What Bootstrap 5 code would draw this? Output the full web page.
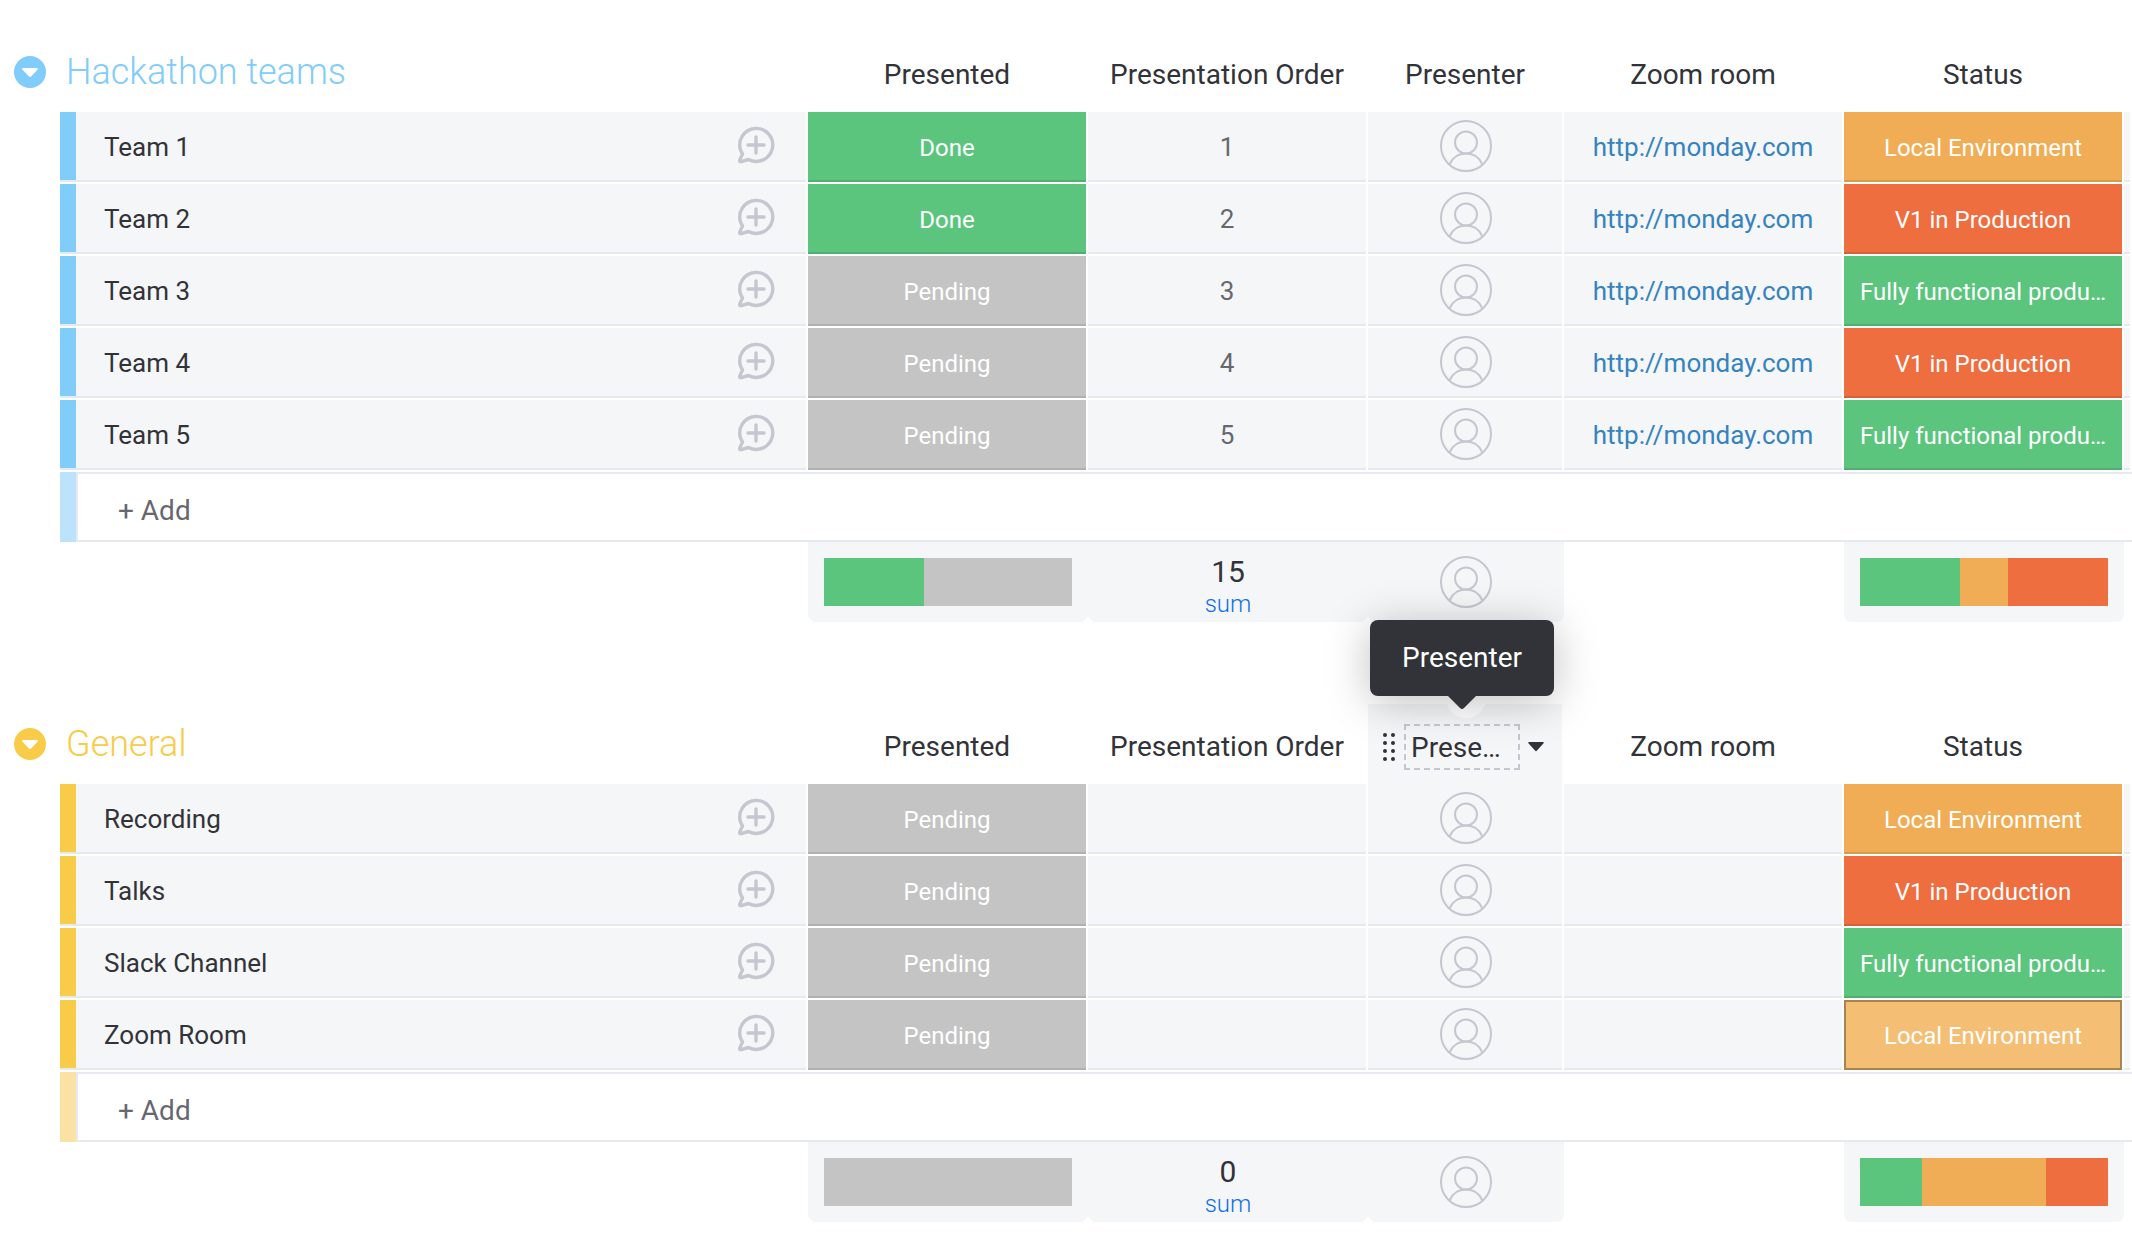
<!DOCTYPE html>
<html lang="en">
<head>
<meta charset="utf-8">
<meta name="viewport" content="width=device-width, initial-scale=1">
<title>Hackathon board</title>
<link href="https://cdn.jsdelivr.net/npm/bootstrap@5.3.0/dist/css/bootstrap.min.css" rel="stylesheet">
<style>
  :root { --cell: #f5f6f8; --line: #e6e9ef; --ink: #323338; --icon: #c5c7d0; --muted: #67686f;
          --done: #5bc57e; --idle: #c4c4c4; --local: #f0ad55; --prod: #ee6e3f; }
  body { font-family: Roboto, "Liberation Sans", sans-serif; color: var(--ink); font-size: 26px; line-height: 32px; overflow-x: hidden; }
  .group-blue { --group: #80ccfb; --group-soft: #bde3fc; }
  .group-yellow { --group: #f8cb48; --group-soft: #fae2a4; }

  .boards { display: grid; row-gap: 82px; }
  .board { table-layout: fixed; border-collapse: separate; border-spacing: 0; }
  .board th, .board td { padding: 0; font-weight: 400; }
  .c-gutter { width: 60px; } .c-bar { width: 16px; } .c-wide { width: 280px; } .c-person { width: 196px; } .c-tail { width: 8px; }

  /* header */
  .board thead th { height: 80px; font-size: 28px; text-align: center; border-right: 2px solid transparent; padding-top: 6px; background-clip: padding-box; }
  .board thead th.group-head { padding: 0 0 0 14px; text-align: left; }
  .group-title { font-size: 36px; font-weight: 300; line-height: 40px; color: var(--group); }
  .icon-btn { border: 0; padding: 0; background: none; display: block; color: inherit; }
  .icon-btn svg, .person { display: block; }
  .toggle { color: var(--group); }

  /* item rows */
  .items td { height: 72px; background: var(--cell); background-clip: padding-box; border-right: 2px solid #fff; border-bottom: 2px solid #fff; box-shadow: inset 0 -2px var(--line); text-align: center; }
  .items td.gutter { background: none; box-shadow: none; }
  .items td.bar { background-color: var(--group); border-right: 0; }
  .items td.item { padding: 0 30px 2px 28px; text-align: left; }
  .item span { padding-top: 2px; }
  .items td.order { color: var(--muted); }
  .items a { color: #3583bf; text-decoration: none; }
  .items td.person-cell { padding: 0 0 2px 2px; }
  .items td.state { color: #fff; font-size: 24px; box-shadow: inset 0 -2px rgba(0,0,0,.1); white-space: nowrap; padding-top: 2px; }
  .s-done { --bg: var(--done); } .s-idle { --bg: var(--idle); } .s-local { --bg: var(--local); } .s-prod { --bg: var(--prod); }
  .items td.state { background-color: var(--bg); }
  .items td.state.picked { background-color: #f4be74; box-shadow: inset 0 0 0 2px #a98350; }
  .bubble { color: var(--icon); }
  .person { color: var(--icon); margin: 0 auto; }

  /* new item row */
  .adder td { height: 70px; }
  .adder .bar { background: var(--group-soft); }
  .adder .add-cell { border: 2px solid var(--line); border-right: 0; }
  .add-input { border: 0; outline: 0; width: 100%; height: 66px; padding: 6px 0 0 40px; font-size: 28px; color: var(--ink); background: none; }
  .add-input::placeholder { color: var(--muted); opacity: 1; }

  /* summary row */
  .totals td { height: 80px; vertical-align: top; text-align: center; }
  .totals td.sum-cell { background: var(--cell); border-radius: 0 0 8px 8px; }
  .totals td.sum-bar { padding: 16px; }
  .totals td.sum-num { padding-top: 14px; }
  .totals td.sum-person { padding-top: 14px; }
  .stack { height: 48px; display: flex; }
  .stack span { background: var(--bg); }
  .total { font-size: 30px; }
  .unit { font-size: 24px; font-weight: 300; color: #0f6fe8; }

  /* hovered column header with its tooltip */
  .board thead th.hovered { background-color: var(--cell); padding-right: 4px; }
  .name-box { border: 2px dashed #c5c7d0; width: 116px; height: 46px; padding: 6px 0 0 5px; text-align: left; line-height: 32px; }
  .knob { position: absolute; z-index: 1; left: 78px; top: -26px; width: 40px; height: 40px; border-radius: 50%; background: #fff; border: 0; padding: 0; }
  .tip { position: absolute; z-index: 2; left: 2px; bottom: 88px; width: 184px; height: 76px; border-radius: 8px; background: var(--ink); color: #fff; line-height: 76px; box-shadow: 0 6px 44px rgba(0,0,0,.25); }
  .tip svg { position: absolute; left: 77px; top: 75px; }
</style>
</head>
<body class="bg-white">

<svg width="0" height="0" class="position-absolute" aria-hidden="true">
  <symbol id="i-toggle" viewBox="0 0 32 32">
    <circle cx="16" cy="16" r="16" fill="currentColor"/>
    <path d="M9 12h14a1 1 0 0 1 .7 1.600l-6.700 6.800a1.400 1.400 0 0 1-2 0l-6.700-6.800A1 1 0 0 1 9 12z" fill="#fff"/>
  </symbol>
  <symbol id="i-bubble" viewBox="0 0 40 40">
    <path d="M4.700 24.500A16.500 16.500 0 1 1 12.500 33.500L5.200 35.700a1.200 1.200 0 0 1-1.500-1.600L6.500 28z" fill="none" stroke="currentColor" stroke-width="3.400" stroke-linejoin="round"/>
    <path d="M20 11v16M12 19h16" stroke="currentColor" stroke-width="3.400" stroke-linecap="round"/>
  </symbol>
  <symbol id="i-person" viewBox="0 0 52 52">
    <g fill="none" stroke="currentColor" stroke-width="2">
      <circle cx="26" cy="26" r="25"/>
      <circle cx="26" cy="22.500" r="11"/>
      <path d="M9.500 44.500C12.500 37.500 18.500 33.500 26 33.500s13.500 4 16.500 11"/>
    </g>
  </symbol>
</svg>

<main class="pt-4">
<div class="boards pt-2">

<table class="board w-100 group-blue">
  <colgroup><col class="c-gutter"><col class="c-bar"><col><col class="c-wide"><col class="c-wide"><col class="c-person"><col class="c-wide"><col class="c-wide"><col class="c-tail"></colgroup>
  <thead>
    <tr>
      <th class="group-head" colspan="3"><div class="d-flex align-items-center"><button class="icon-btn toggle me-3" type="button" aria-label="Collapse group"><svg width="32" height="32"><use href="#i-toggle"/></svg></button><span class="group-title ps-1">Hackathon teams</span></div></th>
      <th>Presented</th><th>Presentation Order</th><th>Presenter</th><th>Zoom room</th><th>Status</th><th></th>
    </tr>
  </thead>
  <tbody class="items">
    <tr>
      <td class="gutter"></td><td class="bar"></td>
      <td class="item"><div class="d-flex justify-content-between align-items-center"><span>Team 1</span><button class="icon-btn bubble" type="button" aria-label="Start conversation"><svg width="40" height="40"><use href="#i-bubble"/></svg></button></div></td>
      <td class="state s-done">Done</td><td class="order">1</td>
      <td class="person-cell"><svg class="person" width="52" height="52"><use href="#i-person"/></svg></td>
      <td class="link"><a href="http://monday.com">http://monday.com</a></td>
      <td class="state s-local">Local Environment</td><td></td>
    </tr>
    <tr>
      <td class="gutter"></td><td class="bar"></td>
      <td class="item"><div class="d-flex justify-content-between align-items-center"><span>Team 2</span><button class="icon-btn bubble" type="button" aria-label="Start conversation"><svg width="40" height="40"><use href="#i-bubble"/></svg></button></div></td>
      <td class="state s-done">Done</td><td class="order">2</td>
      <td class="person-cell"><svg class="person" width="52" height="52"><use href="#i-person"/></svg></td>
      <td class="link"><a href="http://monday.com">http://monday.com</a></td>
      <td class="state s-prod">V1 in Production</td><td></td>
    </tr>
    <tr>
      <td class="gutter"></td><td class="bar"></td>
      <td class="item"><div class="d-flex justify-content-between align-items-center"><span>Team 3</span><button class="icon-btn bubble" type="button" aria-label="Start conversation"><svg width="40" height="40"><use href="#i-bubble"/></svg></button></div></td>
      <td class="state s-idle">Pending</td><td class="order">3</td>
      <td class="person-cell"><svg class="person" width="52" height="52"><use href="#i-person"/></svg></td>
      <td class="link"><a href="http://monday.com">http://monday.com</a></td>
      <td class="state s-done">Fully functional produ…</td><td></td>
    </tr>
    <tr>
      <td class="gutter"></td><td class="bar"></td>
      <td class="item"><div class="d-flex justify-content-between align-items-center"><span>Team 4</span><button class="icon-btn bubble" type="button" aria-label="Start conversation"><svg width="40" height="40"><use href="#i-bubble"/></svg></button></div></td>
      <td class="state s-idle">Pending</td><td class="order">4</td>
      <td class="person-cell"><svg class="person" width="52" height="52"><use href="#i-person"/></svg></td>
      <td class="link"><a href="http://monday.com">http://monday.com</a></td>
      <td class="state s-prod">V1 in Production</td><td></td>
    </tr>
    <tr>
      <td class="gutter"></td><td class="bar"></td>
      <td class="item"><div class="d-flex justify-content-between align-items-center"><span>Team 5</span><button class="icon-btn bubble" type="button" aria-label="Start conversation"><svg width="40" height="40"><use href="#i-bubble"/></svg></button></div></td>
      <td class="state s-idle">Pending</td><td class="order">5</td>
      <td class="person-cell"><svg class="person" width="52" height="52"><use href="#i-person"/></svg></td>
      <td class="link"><a href="http://monday.com">http://monday.com</a></td>
      <td class="state s-done">Fully functional produ…</td><td></td>
    </tr>
  </tbody>
  <tfoot>
    <tr class="adder"><td></td><td class="bar"></td><td class="add-cell" colspan="7"><input class="add-input d-block" type="text" placeholder="+ Add" aria-label="Add item to Hackathon teams"></td></tr>
    <tr class="totals">
      <td colspan="3"></td>
      <td class="sum-cell sum-bar"><div class="stack"><span class="s-done" style="width:40.300%"></span><span class="s-idle" style="width:59.700%"></span></div></td>
      <td class="sum-cell sum-num"><div class="total">15</div><div class="unit">sum</div></td>
      <td class="sum-cell sum-person"><svg class="person" width="52" height="52"><use href="#i-person"/></svg></td>
      <td></td>
      <td class="sum-cell sum-bar"><div class="stack"><span class="s-done" style="width:40.300%"></span><span class="s-local" style="width:19.400%"></span><span class="s-prod" style="width:40.300%"></span></div></td>
      <td></td>
    </tr>
  </tfoot>
</table>

<table class="board w-100 group-yellow">
  <colgroup><col class="c-gutter"><col class="c-bar"><col><col class="c-wide"><col class="c-wide"><col class="c-person"><col class="c-wide"><col class="c-wide"><col class="c-tail"></colgroup>
  <thead>
    <tr>
      <th class="group-head" colspan="3"><div class="d-flex align-items-center"><button class="icon-btn toggle me-3" type="button" aria-label="Collapse group"><svg width="32" height="32"><use href="#i-toggle"/></svg></button><span class="group-title ps-1">General</span></div></th>
      <th>Presented</th><th>Presentation Order</th>
      <th class="hovered position-relative">
        <button class="knob" type="button" aria-label="Collapse column"></button>
        <div class="tip" role="tooltip">Presenter<svg width="30" height="15" viewBox="0 0 30 15"><path d="M0 0h30L17 13a3 3 0 0 1-4 0z" fill="#323338"/></svg></div>
        <div class="d-flex align-items-center justify-content-center gap-2">
          <svg width="14" height="30" viewBox="0 0 14 30" fill="#323338"><circle cx="3" cy="3" r="2"/><circle cx="11" cy="3" r="2"/><circle cx="3" cy="11" r="2"/><circle cx="11" cy="11" r="2"/><circle cx="3" cy="19" r="2"/><circle cx="11" cy="19" r="2"/><circle cx="3" cy="27" r="2"/><circle cx="11" cy="27" r="2"/></svg>
          <div class="name-box">Prese…</div>
          <button class="icon-btn" type="button" aria-label="Column menu"><svg width="16" height="10" viewBox="0 0 16 10"><path d="M1 0h14a.8.8 0 0 1 .6 1.300L9 8.600a1.300 1.300 0 0 1-2 0L.4 1.300A.8.8 0 0 1 1 0z" fill="#323338"/></svg></button>
        </div>
      </th>
      <th>Zoom room</th><th>Status</th><th></th>
    </tr>
  </thead>
  <tbody class="items">
    <tr>
      <td class="gutter"></td><td class="bar"></td>
      <td class="item"><div class="d-flex justify-content-between align-items-center"><span>Recording</span><button class="icon-btn bubble" type="button" aria-label="Start conversation"><svg width="40" height="40"><use href="#i-bubble"/></svg></button></div></td>
      <td class="state s-idle">Pending</td><td></td>
      <td class="person-cell"><svg class="person" width="52" height="52"><use href="#i-person"/></svg></td>
      <td></td>
      <td class="state s-local">Local Environment</td><td></td>
    </tr>
    <tr>
      <td class="gutter"></td><td class="bar"></td>
      <td class="item"><div class="d-flex justify-content-between align-items-center"><span>Talks</span><button class="icon-btn bubble" type="button" aria-label="Start conversation"><svg width="40" height="40"><use href="#i-bubble"/></svg></button></div></td>
      <td class="state s-idle">Pending</td><td></td>
      <td class="person-cell"><svg class="person" width="52" height="52"><use href="#i-person"/></svg></td>
      <td></td>
      <td class="state s-prod">V1 in Production</td><td></td>
    </tr>
    <tr>
      <td class="gutter"></td><td class="bar"></td>
      <td class="item"><div class="d-flex justify-content-between align-items-center"><span>Slack Channel</span><button class="icon-btn bubble" type="button" aria-label="Start conversation"><svg width="40" height="40"><use href="#i-bubble"/></svg></button></div></td>
      <td class="state s-idle">Pending</td><td></td>
      <td class="person-cell"><svg class="person" width="52" height="52"><use href="#i-person"/></svg></td>
      <td></td>
      <td class="state s-done">Fully functional produ…</td><td></td>
    </tr>
    <tr>
      <td class="gutter"></td><td class="bar"></td>
      <td class="item"><div class="d-flex justify-content-between align-items-center"><span>Zoom Room</span><button class="icon-btn bubble" type="button" aria-label="Start conversation"><svg width="40" height="40"><use href="#i-bubble"/></svg></button></div></td>
      <td class="state s-idle">Pending</td><td></td>
      <td class="person-cell"><svg class="person" width="52" height="52"><use href="#i-person"/></svg></td>
      <td></td>
      <td class="state s-local picked">Local Environment</td><td></td>
    </tr>
  </tbody>
  <tfoot>
    <tr class="adder"><td></td><td class="bar"></td><td class="add-cell" colspan="7"><input class="add-input d-block" type="text" placeholder="+ Add" aria-label="Add item to General"></td></tr>
    <tr class="totals">
      <td colspan="3"></td>
      <td class="sum-cell sum-bar"><div class="stack"><span class="s-idle" style="width:100%"></span></div></td>
      <td class="sum-cell sum-num"><div class="total">0</div><div class="unit">sum</div></td>
      <td class="sum-cell sum-person"><svg class="person" width="52" height="52"><use href="#i-person"/></svg></td>
      <td></td>
      <td class="sum-cell sum-bar"><div class="stack"><span class="s-done" style="width:25%"></span><span class="s-local" style="width:50%"></span><span class="s-prod" style="width:25%"></span></div></td>
      <td></td>
    </tr>
  </tfoot>
</table>

</div>
</main>
<script src="https://cdn.jsdelivr.net/npm/bootstrap@5.3.0/dist/js/bootstrap.bundle.min.js"></script>
</body>
</html>
